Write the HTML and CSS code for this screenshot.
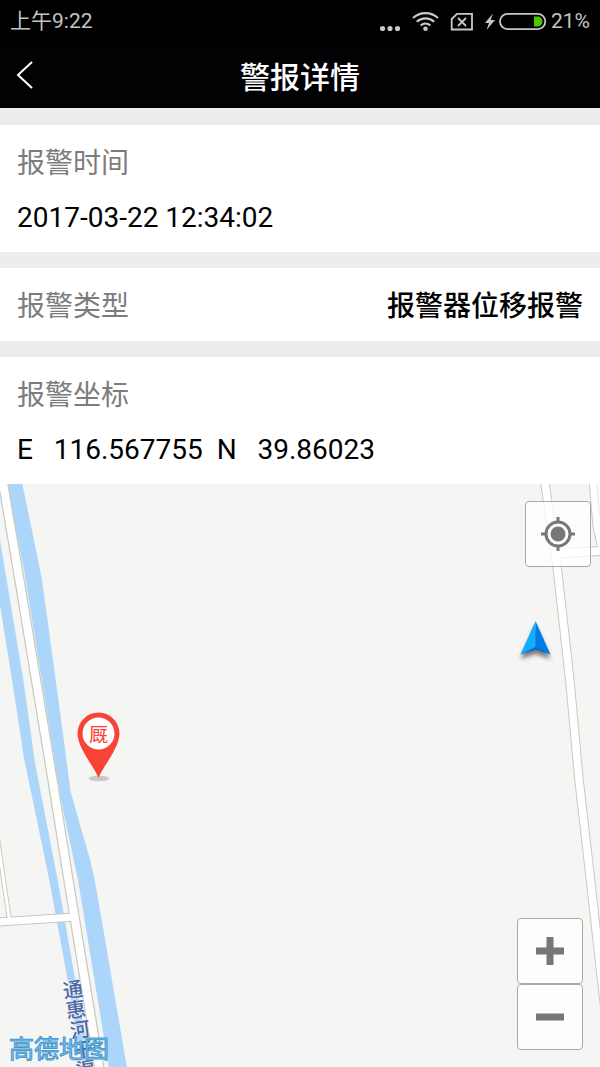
FILE: index.html
```
<!DOCTYPE html>
<html lang="zh-CN">
<head>
<meta charset="utf-8">
<meta name="viewport" content="width=device-width, initial-scale=1">
<title>警报详情</title>
<link rel="stylesheet" href="styles.css">
</head>
<body>
<div class="app">
  <header class="top">
    <div class="status">
      <span class="status-time">上午9:22</span>
      <svg class="status-icons" width="168" height="40" viewBox="380 0 168 40" aria-hidden="true">
        <g fill="#c8c8c8">
          <circle cx="382.500" cy="27.500" r="2.600"/>
          <circle cx="390" cy="27.500" r="2.600"/>
          <circle cx="397.500" cy="27.500" r="2.600"/>
          <circle cx="425.500" cy="27.700" r="2.300"/>
          <path d="M493 12.500 L485 22 h4 l-2.500 7 8.500 -10 h-4.300 z"/>
        </g>
        <g fill="none" stroke="#c8c8c8">
          <path stroke-width="2.200" d="M413 17 a18.500 18.500 0 0 1 25 0 M416.800 20.800 a13 13 0 0 1 17.400 0 M420.600 24.500 a7.500 7.500 0 0 1 9.800 0"/>
          <path stroke-width="1.800" d="M457 12.800 h15 v15.700 h-20.300 v-10.500 z"/>
          <path stroke-width="1.800" d="M458 17 l8 8 M466 17 l-8 8"/>
          <rect x="500" y="12.800" width="45.300" height="15.300" rx="7.600" stroke-width="1.800"/>
        </g>
        <path fill="#4cc800" d="M534 15.500 h3.500 a5 5 0 0 1 0 10 h-3.500 z"/>
      </svg>
      <span class="status-battery">21%</span>
    </div>
    <div class="titlebar">
      <button class="back" type="button" aria-label="返回">
        <svg width="18" height="30" viewBox="0 0 18 30" aria-hidden="true"><path d="M16 2 L2 15 L16 28" fill="none" stroke="#fff" stroke-width="2"/></svg>
      </button>
      <h1 class="title">警报详情</h1>
    </div>
  </header>

  <main class="content">
    <section class="card">
      <h2 class="label">报警时间</h2>
      <p class="value">2017-03-22 12:34:02</p>
    </section>
    <section class="card card-row">
      <h2 class="label">报警类型</h2>
      <p class="value value-strong">报警器位移报警</p>
    </section>
    <section class="card">
      <h2 class="label">报警坐标</h2>
      <p class="value">E   116.567755  N   39.86023</p>
    </section>
  </main>

  <section class="map" aria-label="地图">
    <svg class="map-canvas" viewBox="0 484 600 583" preserveAspectRatio="xMidYMin slice" role="img" aria-label="报警位置">
      <g fill="#abd5f9">
        <path d="M7 484 H22.300 L26.700 505 L41.700 578 L55.700 680 L70.700 792 L75 807 L90.700 862 L94.700 880 L101.700 920 L127 1068 H109 L78 880 L61 800 L41.700 680 L24 570 Z"/>
        <path d="M0 540 L23.300 680 L35 763 L57.700 880 L75.300 980 L91 1068 H83 L67.700 980 L49.300 880 L24 758 L12 680 L0 605 Z"/>
      </g>
      <g fill="none" stroke="#c9c9c0">
        <path stroke-width="10.500" d="M2.500 480 L19.500 580 L36 680 L52.500 780 L68.500 880 L75 920 L99.500 1070"/>
        <path stroke-width="9" d="M-2 922 L75 917"/>
        <path stroke-width="5" d="M-5 820 L3.500 880 L9.500 920"/>
        <path stroke-width="9.500" d="M544.500 480 L557 566 L569.800 680 L579 780 L590.500 880 L605 1010"/>
        <path stroke-width="10" d="M556 553.500 L602 551"/>
      </g>
      <path fill="#fff" stroke="#c9c9c0" d="M589 480 L593 527 L598 549 H604 V480 Z"/>
      <g fill="none" stroke="#fff">
        <path stroke-width="8" d="M2.500 480 L19.500 580 L36 680 L52.500 780 L68.500 880 L75 920 L99.500 1070"/>
        <path stroke-width="7" d="M-2 922 L75 917"/>
        <path stroke-width="3" d="M-5 820 L3.500 880 L9.500 920"/>
        <path stroke-width="7.500" d="M544.500 480 L557 566 L569.800 680 L579 780 L590.500 880 L605 1010"/>
        <path stroke-width="8" d="M556 553.500 L602 551"/>
      </g>
      <path fill="none" stroke="#e6e6e2" d="M596.500 480 L599.500 515"/>

      <g class="river-name">
        <text transform="translate(73 990) rotate(-8)" y="7">通</text>
        <text transform="translate(76 1010) rotate(-8)" y="7">惠</text>
        <text transform="translate(80 1030) rotate(-8)" y="7">河</text>
        <text transform="translate(83 1050) rotate(-8)" y="7">干</text>
        <text transform="translate(86 1070) rotate(-8)" y="7">渠</text>
      </g>

      <ellipse cx="99" cy="778.500" rx="10.500" ry="2.800" fill="#c9c9c7"/>
      <path fill="#f94336" d="M98.500 778 C95 768 77.500 748 77.500 733.500 a21 21 0 0 1 42 0 C119.500 748 102 768 98.500 778 Z"/>
      <circle cx="98.500" cy="733.500" r="16" fill="#fff"/>
      <text class="pin-name" x="98.500" y="742">厩</text>

      <path class="arrow-shadow" fill="#777" d="M535.500 626 L550.500 659 L535.500 654 L520.500 659 Z"/>
      <path fill="#10aefc" d="M535.500 621 L520.500 654.500 L535.500 648 Z"/>
      <path fill="#007bea" d="M535.500 621 L550.500 654.500 L535.500 648 Z"/>
      <path fill="#0766c2" d="M520.500 654.500 L535.500 647 L550.500 654.500 L535.500 649.500 Z"/>
    </svg>
    <button class="map-button locate" type="button" aria-label="定位">
      <svg width="34" height="34" viewBox="0 0 34 34" aria-hidden="true">
        <circle cx="17" cy="17" r="7.500" fill="#777"/>
        <circle cx="17" cy="17" r="12" fill="none" stroke="#777" stroke-width="3"/>
        <path d="M17 0 V5 M17 29 V34 M0 17 H5 M29 17 H34" stroke="#777" stroke-width="3"/>
      </svg>
    </button>
    <div class="zoom">
      <button class="map-button" type="button" aria-label="放大">
        <svg width="28" height="28" viewBox="0 0 28 28" aria-hidden="true"><path d="M14 0 V28 M0 14 H28" stroke="#777" stroke-width="7"/></svg>
      </button>
      <button class="map-button" type="button" aria-label="缩小">
        <svg width="28" height="28" viewBox="0 0 28 28" aria-hidden="true"><path d="M0 14 H28" stroke="#777" stroke-width="7"/></svg>
      </button>
    </div>
    <span class="brand">高德地图</span>
  </section>
</div>
</body>
</html>
```
FILE: styles.css
```
* {
  box-sizing: border-box;
}

body {
  margin: 0;
  background: #ededed;
}

button {
  margin: 0;
  padding: 0;
  border: 0;
  background: none;
  cursor: pointer;
}

svg {
  display: block;
}

.app {
  display: flex;
  flex-direction: column;
  min-height: 100vh;
  font-family: Roboto, "Noto Sans CJK SC", sans-serif;
  color: #000;
}

.top {
  background: #020104;
  color: #fff;
}

.status {
  display: flex;
  align-items: center;
  gap: 3px;
  height: 42px;
  padding: 0 10px;
  background: #000;
  color: #c3c3c3;
  font-size: 21px;
  line-height: 40px;
}

.status-time {
  margin-right: auto;
}

.titlebar {
  display: grid;
  grid-template-columns: 60px 1fr 60px;
  align-items: center;
  height: 66px;
}

.back {
  display: flex;
  align-items: center;
  height: 66px;
  padding-left: 16px;
}

.title {
  margin: 0;
  padding-top: 5px;
  font-size: 30px;
  font-weight: 500;
  line-height: 40px;
  text-align: center;
}

.content {
  display: grid;
  gap: 16px;
  padding-top: 17px;
}

.card {
  display: grid;
  gap: 14px;
  padding: 19px 17px 14px;
  background: #fff;
}

.card-row {
  display: flex;
  justify-content: space-between;
}

.label,
.value {
  margin: 0;
  font-size: 28px;
  font-weight: 400;
  line-height: 40px;
}

.label {
  color: #7c7c7c;
}

.value {
  white-space: pre-wrap;
}

.value-strong {
  font-weight: 500;
}

.map {
  position: relative;
  flex: 1;
  min-height: 400px;
  overflow: hidden;
  background: #f5f5f3;
}

.map-canvas {
  position: absolute;
  inset: 0;
  width: 100%;
  height: 100%;
}

.river-name {
  fill: #4a68a8;
  stroke: #f5f5f3;
  stroke-width: 1px;
  paint-order: stroke;
  font-size: 20px;
  font-weight: 500;
  text-anchor: middle;
}

.pin-name {
  fill: #f94336;
  font-size: 19px;
  text-anchor: middle;
}

.arrow-shadow {
  filter: blur(2px);
}

.map-button {
  display: flex;
  align-items: center;
  justify-content: center;
  width: 66px;
  height: 66px;
  border: 1px solid #a8a8a8;
  border-radius: 4px;
  background: rgba(255, 255, 255, 0.75);
}

.locate {
  position: absolute;
  top: 17px;
  right: 9px;
}

.zoom {
  position: absolute;
  right: 17px;
  bottom: 17px;
}

.brand {
  position: absolute;
  left: 9px;
  bottom: 2px;
  color: #8cc8ee;
  font-size: 25px;
  line-height: 30px;
  -webkit-text-stroke: 1px #4398d0;
}
```
